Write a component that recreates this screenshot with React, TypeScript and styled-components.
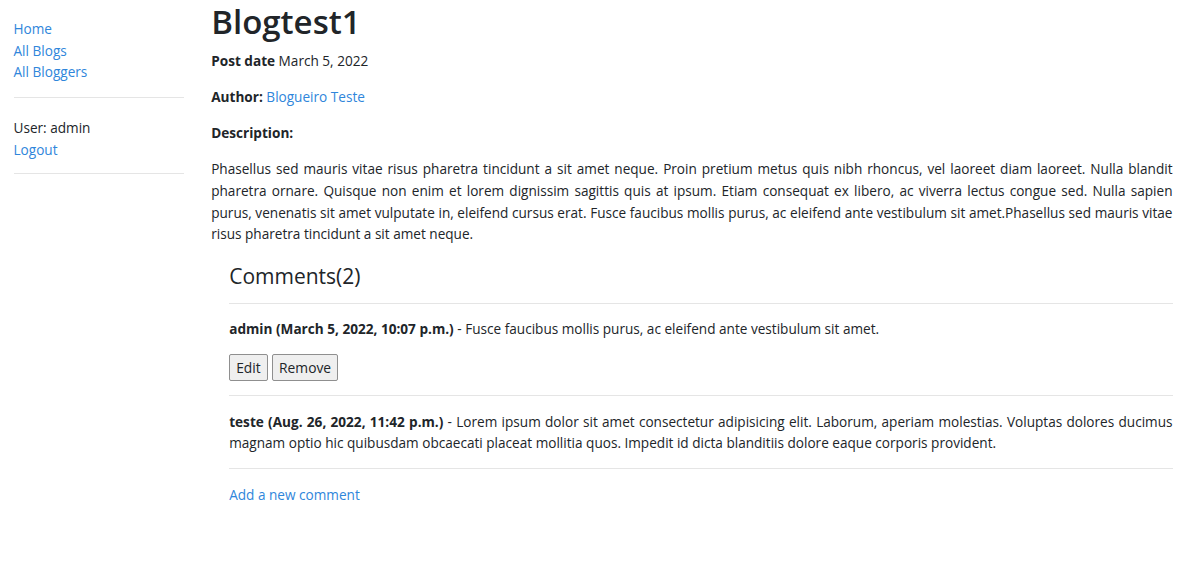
import React from "react";
import styled, { createGlobalStyle } from "styled-components";

const GlobalStyle = createGlobalStyle`
  html, body {
    margin: 0;
    padding: 0;
    background: #ffffff;
  }
  body {
    font-family: "Open Sans", "Noto Sans", sans-serif;
    font-size: 13.6px;
    line-height: 21.6px;
    color: #212529;
  }
  * { box-sizing: border-box; }
`;

const Page = styled.div`
  display: flex;
  width: 100%;
`;

const Sidebar = styled.aside`
  flex: 0 0 197.7px;
  padding: 18px 13.5px 0;
`;

const NavList = styled.ul`
  list-style: none;
  margin: 0;
  padding: 0;
`;

const Link = styled.a`
  color: #2f86db;
  text-decoration: none;
`;

const Rule = styled.hr<{ $top: number; $bottom: number }>`
  border: 0;
  border-top: 1px solid rgba(0, 0, 0, 0.1);
  margin: ${(p) => p.$top}px 0 ${(p) => p.$bottom}px;
  height: 0;
`;

const Main = styled.main`
  flex: 1;
  padding: 0 13.5px;
  min-width: 0;
`;

const Title = styled.h1`
  font-size: 33px;
  font-weight: 600;
  line-height: 43.2px;
  margin: 0 0 7.2px;
`;

const Para = styled.p<{ $justify?: boolean }>`
  margin: 0 0 14.4px;
  text-align: ${(p) => (p.$justify ? "justify" : "left")};
`;

const Comments = styled.section`
  margin-left: 18px;
`;

const CommentsTitle = styled.h4`
  font-size: 21px;
  font-weight: 500;
  line-height: 26px;
  margin: 18px 0 14px;
`;

const ButtonRow = styled.div`
  display: flex;
  gap: 4.4px;
  margin: 0 0 14.4px;
`;

const Button = styled.button`
  font-family: inherit;
  font-size: 13.8px;
  line-height: 1;
  height: 27px;
  padding: 0 6px;
  color: #212529;
  background: #efefef;
  border: 1px solid #8f8f8f;
  border-radius: 2px;
`;

export default function App() {
  return (
    <>
      <GlobalStyle />
      <Page>
        <Sidebar>
          <NavList>
            <li><Link href="#">Home</Link></li>
            <li><Link href="#">All Blogs</Link></li>
            <li><Link href="#">All Bloggers</Link></li>
          </NavList>
          <Rule $top={14.4} $bottom={19} />
          <NavList>
            <li>User: admin</li>
            <li><Link href="#">Logout</Link></li>
          </NavList>
          <Rule $top={13} $bottom={0} />
        </Sidebar>
        <Main>
          <Title>Blogtest1</Title>
          <Para><strong>Post date</strong> March 5, 2022</Para>
          <Para><strong>Author:</strong> <Link href="#">Blogueiro Teste</Link></Para>
          <Para><strong>Description:</strong></Para>
          <Para $justify>
            Phasellus sed mauris vitae risus pharetra tincidunt a sit amet neque. Proin pretium metus quis nibh rhoncus, vel laoreet diam laoreet. Nulla blandit pharetra ornare. Quisque non enim et lorem dignissim sagittis quis at ipsum. Etiam consequat ex libero, ac viverra lectus congue sed. Nulla sapien purus, venenatis sit amet vulputate in, eleifend cursus erat. Fusce faucibus mollis purus, ac eleifend ante vestibulum sit amet.Phasellus sed mauris vitae risus pharetra tincidunt a sit amet neque.
          </Para>
          <Comments>
            <CommentsTitle>Comments(2)</CommentsTitle>
            <Rule $top={0} $bottom={14.4} />
            <Para $justify>
              <strong>admin (March 5, 2022, 10:07 p.m.)</strong> - Fusce faucibus mollis purus, ac eleifend ante vestibulum sit amet.
            </Para>
            <ButtonRow>
              <Button>Edit</Button>
              <Button>Remove</Button>
            </ButtonRow>
            <Rule $top={0} $bottom={14.4} />
            <Para $justify>
              <strong>teste (Aug. 26, 2022, 11:42 p.m.)</strong> - Lorem ipsum dolor sit amet consectetur adipisicing elit. Laborum, aperiam molestias. Voluptas dolores ducimus magnam optio hic quibusdam obcaecati placeat mollitia quos. Impedit id dicta blanditiis dolore eaque corporis provident.
            </Para>
            <Rule $top={0} $bottom={14.4} />
            <Para><Link href="#">Add a new comment</Link></Para>
          </Comments>
        </Main>
      </Page>
    </>
  );
}
